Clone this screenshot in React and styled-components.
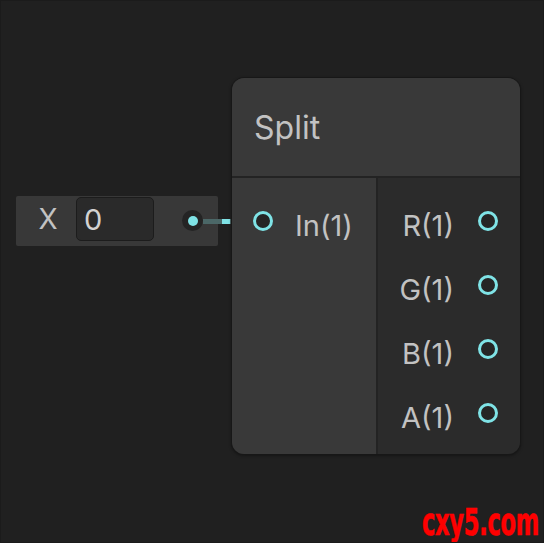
import React from 'react';
import styled, { createGlobalStyle } from 'styled-components'

const GlobalStyle = createGlobalStyle`
  html, body {
    margin: 0;
    padding: 0;
    background: #202020;
  }
`

const Canvas = styled.div`
  position: relative;
  width: 544px;
  height: 543px;
  box-sizing: border-box;
  border: 1px solid #1b1b1b;
  background: #202020;
  overflow: hidden;
  font-family: Inter, "Noto Sans", sans-serif;
  color: #c2c2c2;
`

const PropertyNode = styled.div`
  position: absolute;
  left: 15px;
  top: 195px;
  width: 202px;
  height: 50px;
  background: #383838;
  border-radius: 2px;
  display: flex;
  align-items: flex-start;
`

const PropLabel = styled.span`
  width: 60px;
  height: 46px;
  display: flex;
  align-items: center;
  justify-content: center;
  font-size: 28px;
  padding-left: 4px;
  box-sizing: border-box;
`

const Field = styled.div`
  margin-top: 1px;
  width: 78px;
  height: 44px;
  box-sizing: border-box;
  background: #2a2a2a;
  border: 1px solid #1c1c1c;
  border-radius: 5px;
  display: flex;
  align-items: center;
  padding-left: 7px;
  font-size: 29px;
  color: #d2d2d2;
`

const OutDot = styled.div`
  margin-left: auto;
  margin-right: 15px;
  margin-top: 14px;
  width: 21px;
  height: 21px;
  border-radius: 50%;
  background: #242424;
  display: flex;
  align-items: center;
  justify-content: center;

  &::after {
    content: '';
    width: 10px;
    height: 10px;
    border-radius: 50%;
    background: #7fe3e6;
  }
`

const Wire = styled.svg`
  position: absolute;
  left: 200px;
  top: 210px;
`

const Node = styled.div`
  position: absolute;
  left: 230px;
  top: 76px;
  width: 290px;
  height: 378px;
  box-sizing: border-box;
  border: 1px solid #171717;
  border-radius: 13px;
  overflow: hidden;
  display: flex;
  flex-direction: column;
  background: #232323;
  box-shadow: 0 1px 3px rgba(0, 0, 0, 0.35);
`

const Header = styled.div`
  height: 98px;
  flex-shrink: 0;
  background: #393939;
  display: flex;
  align-items: center;
  padding-left: 22px;
  font-size: 32px;
  border-bottom: 2px solid #232323;
`

const Body = styled.div`
  flex: 1;
  display: flex;
`

const Column = styled.div`
  background: ${p => (p.$side === 'in' ? '#393939' : '#2b2b2b')};
  width: ${p => (p.$side === 'in' ? '144px' : 'auto')};
  flex: ${p => (p.$side === 'in' ? 'none' : '1')};
  border-right: ${p => (p.$side === 'in' ? '2px solid #232323' : 'none')};
  padding-top: 11px;
  display: flex;
  flex-direction: column;
`

const Row = styled.div`
  height: 64px;
  display: flex;
  align-items: center;
  justify-content: ${p => (p.$side === 'in' ? 'flex-start' : 'flex-end')};
  gap: ${p => (p.$side === 'in' ? '22px' : '24px')};
  padding: ${p => (p.$side === 'in' ? '0 0 0 21px' : '0 22px 0 0')};
`

const Port = styled.div`
  width: 20px;
  height: 20px;
  box-sizing: border-box;
  border-radius: 50%;
  border: 3px solid #7fe3e6;
  background: #252525;
  flex-shrink: 0;
`

const PortLabel = styled.span`
  font-size: 29px;
  margin-top: 9px;
`

const Watermark = styled.div`
  position: absolute;
  right: 4px;
  bottom: 1px;
  font-family: "DejaVu Sans Condensed", "Liberation Sans", sans-serif;
  font-weight: 700;
  font-size: 37px;
  line-height: 37px;
  letter-spacing: -0.5px;
  color: #ff0000;
  -webkit-text-stroke: 0.6px #ff0000;
  transform: scaleX(0.68);
  transform-origin: right bottom;
`

const outputs = ['R(1)', 'G(1)', 'B(1)', 'A(1)']

class App extends React.Component {
  render() {
    return (
      <Canvas>
        <GlobalStyle />
        <PropertyNode>
          <PropLabel>X</PropLabel>
          <Field>0</Field>
          <OutDot />
        </PropertyNode>
        <Wire width="60" height="20">
          <rect x="2" y="8" width="52" height="5" fill="#4b6767" />
          <rect x="21" y="8" width="8" height="5" fill="#7fe3e6" />
        </Wire>
        <Node>
          <Header>Split</Header>
          <Body>
            <Column $side="in">
              <Row $side="in">
                <Port />
                <PortLabel>In(1)</PortLabel>
              </Row>
            </Column>
            <Column $side="out">
              {outputs.map(name => (
                <Row $side="out" key={name}>
                  <PortLabel>{name}</PortLabel>
                  <Port />
                </Row>
              ))}
            </Column>
          </Body>
        </Node>
        <Watermark>cxy5.com</Watermark>
      </Canvas>
    );
  }
}

export default App;
